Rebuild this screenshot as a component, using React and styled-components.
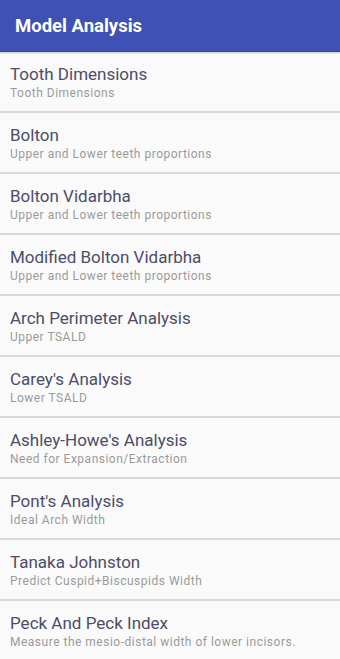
import React from "react";
import styled, { createGlobalStyle } from "styled-components";

const GlobalStyle = createGlobalStyle`
  html, body {
    margin: 0;
    padding: 0;
    background: #fafafa;
    font-family: Roboto, "Noto Sans", sans-serif;
  }
`;

const Screen = styled.div`
  width: 340px;
  height: 659px;
  overflow: hidden;
  background: #fafafa;
`;

const AppBar = styled.header`
  height: 51px;
  background: #3f51b5;
  border-bottom: 1px solid #3646a3;
  display: flex;
  align-items: center;
  padding: 0 15px;
  box-shadow: 0 1px 2px rgba(0, 0, 0, 0.25);
  position: relative;
`;

const AppTitle = styled.h1`
  margin: 0;
  color: #ffffff;
  font-size: 18.5px;
  font-weight: 700;
`;

const List = styled.ul`
  list-style: none;
  margin: 0;
  padding: 0;
`;

const Item = styled.li`
  height: 47px;
  padding: 12px 10px 0;
  border-bottom: 2px solid #d3dada;
  display: flex;
  flex-direction: column;
  gap: 2px;
`;

const Title = styled.div`
  font-size: 17px;
  color: #4c4d68;
  line-height: 20px;
  white-space: nowrap;
`;

const Subtitle = styled.div`
  font-size: 12px;
  color: #9a9a9a;
  line-height: 15px;
  letter-spacing: 0.5px;
  white-space: nowrap;
`;

const items = [
  ["Tooth Dimensions", "Tooth Dimensions"],
  ["Bolton", "Upper and Lower teeth proportions"],
  ["Bolton Vidarbha", "Upper and Lower teeth proportions"],
  ["Modified Bolton Vidarbha", "Upper and Lower teeth proportions"],
  ["Arch Perimeter Analysis", "Upper TSALD"],
  ["Carey's Analysis", "Lower TSALD"],
  ["Ashley-Howe's Analysis", "Need for Expansion/Extraction"],
  ["Pont's Analysis", "Ideal Arch Width"],
  ["Tanaka Johnston", "Predict Cuspid+Biscuspids Width"],
  ["Peck And Peck Index", "Measure the mesio-distal width of lower incisors."],
];

function App() {
  return (
    <Screen>
      <GlobalStyle />
      <AppBar>
        <AppTitle>Model Analysis</AppTitle>
      </AppBar>
      <List>
        {items.map(([title, sub]) => (
          <Item key={title}>
            <Title>{title}</Title>
            <Subtitle>{sub}</Subtitle>
          </Item>
        ))}
      </List>
    </Screen>
  );
}

export default App;
